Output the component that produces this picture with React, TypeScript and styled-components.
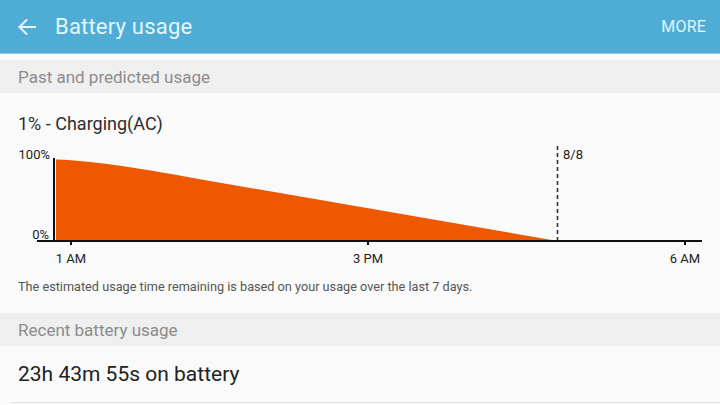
import React from "react";
import styled, { createGlobalStyle } from "styled-components";

const GlobalStyle = createGlobalStyle`
  html, body {
    margin: 0;
    padding: 0;
    background: #fafafa;
  }
  body {
    width: 720px;
    height: 405px;
    overflow: hidden;
    font-family: Roboto, "Noto Sans", "Liberation Sans", sans-serif;
  }
`;

const Page = styled.div`
  width: 720px;
  height: 405px;
  display: flex;
  flex-direction: column;
  background: #fafafa;
`;

const AppBar = styled.header`
  height: 53px;
  flex-shrink: 0;
  display: flex;
  align-items: center;
  padding: 0 14px 0 18px;
  background: #4fadd5;
  border-bottom: 1px solid #93cfe8;
  color: #e4f5fb;
`;

const BackButton = styled.button`
  width: 18px;
  height: 16px;
  padding: 0;
  margin-right: 19px;
  border: none;
  background: none;
  display: flex;
  color: inherit;
`;

const Title = styled.h1`
  flex: 1;
  margin: 0;
  font-size: 22px;
  font-weight: 400;
  letter-spacing: 0.2px;
`;

const More = styled.span`
  font-size: 16px;
  font-weight: 400;
  letter-spacing: 0.2px;
`;

const SectionHeader = styled.div<{ $top?: number }>`
  margin-top: ${(p) => p.$top ?? 0}px;
  height: 33px;
  flex-shrink: 0;
  display: flex;
  align-items: center;
  padding-left: 18px;
  background: #efefef;
  color: #8c8c8c;
  font-size: 17px;
`;

const Status = styled.div`
  margin-top: 19px;
  padding-left: 18px;
  font-size: 18px;
  line-height: 24px;
  color: #2e2e2e;
`;

const Chart = styled.svg`
  display: block;
  margin-top: 4px;
  width: 720px;
  height: 128px;

  text {
    font-family: Roboto, "Noto Sans", "Liberation Sans", sans-serif;
    font-size: 13px;
    fill: #222;
  }
`;

const Note = styled.p`
  margin: 11px 0 18px;
  padding-left: 18px;
  font-size: 12.7px;
  line-height: 16px;
  color: #555;
`;

const UsageRow = styled.div`
  height: 56px;
  margin-left: 10px;
  padding-left: 8px;
  display: flex;
  align-items: center;
  border-bottom: 1px solid #e2e2e2;
  font-size: 21px;
  color: #222;
`;

const ticks = [
  { x: 71, label: "1 AM" },
  { x: 368, label: "3 PM" },
  { x: 685, label: "6 AM" },
];

const UsageChart = () => (
  <Chart viewBox="0 0 720 128">
    <path
      d="M56 19.5 C95 20.5 150 30 200 39.3 L557.5 101 L56 101 Z"
      fill="#ee5800"
    />
    <line x1="54" y1="18" x2="54" y2="102" stroke="#111" strokeWidth="2" />
    <line x1="37" y1="101" x2="702" y2="101" stroke="#111" strokeWidth="2" />
    <line
      x1="557.5"
      y1="6"
      x2="557.5"
      y2="100"
      stroke="#333"
      strokeWidth="1.6"
      strokeDasharray="4 3"
    />
    {ticks.map((t) => (
      <g key={t.label}>
        <line x1={t.x} y1="101" x2={t.x} y2="105" stroke="#111" strokeWidth="2" />
        <text x={t.x} y="123" textAnchor="middle">
          {t.label}
        </text>
      </g>
    ))}
    <text x="50" y="19" textAnchor="end">
      100%
    </text>
    <text x="49" y="99" textAnchor="end">
      0%
    </text>
    <text x="563" y="19">
      8/8
    </text>
  </Chart>
);

export default function App() {
  return (
    <Page>
      <GlobalStyle />
      <AppBar>
        <BackButton aria-label="Back">
          <svg width="18" height="16" viewBox="0 0 18 16" fill="none">
            <path
              d="M1.5 8H17M8.5 1L1.5 8L8.5 15"
              stroke="currentColor"
              strokeWidth="2"
              strokeLinecap="square"
            />
          </svg>
        </BackButton>
        <Title>Battery usage</Title>
        <More>MORE</More>
      </AppBar>
      <SectionHeader $top={6}>Past and predicted usage</SectionHeader>
      <Status>1% - Charging(AC)</Status>
      <UsageChart />
      <Note>
        The estimated usage time remaining is based on your usage over the last
        7 days.
      </Note>
      <SectionHeader>Recent battery usage</SectionHeader>
      <UsageRow>23h 43m 55s on battery</UsageRow>
    </Page>
  );
}
